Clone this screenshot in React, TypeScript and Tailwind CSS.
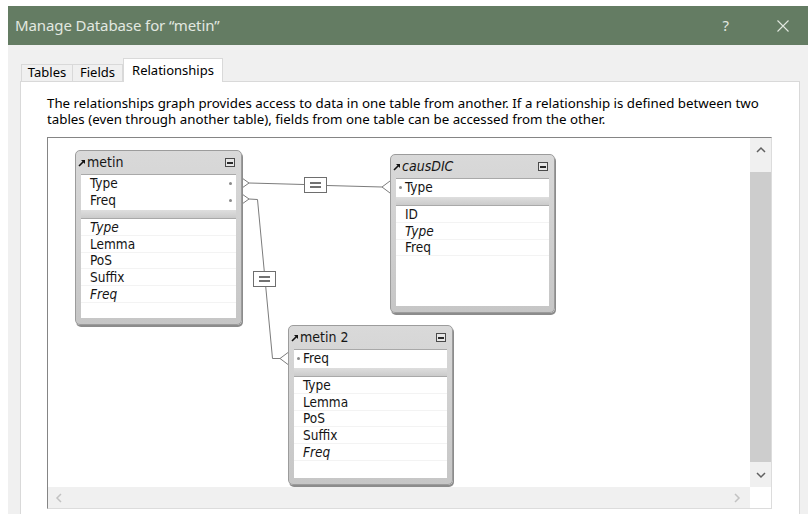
import React from "react";

type Field = { name: string; italic?: boolean };
type KeyField = Field & { dot: "left" | "right" };

type TableProps = {
  name: string;
  italicName?: boolean;
  keys: KeyField[];
  fields: Field[];
  className: string;
};

function LinkArrow() {
  return (
    <svg width="8" height="8" viewBox="0 0 8 8" className="shrink-0">
      <path d="M1 7 L5.5 2.5" stroke="#111" strokeWidth="1.6" />
      <path d="M3 1 H7 V5 Z" fill="#111" />
    </svg>
  );
}

function CollapseBox() {
  return (
    <div className="flex h-[9px] w-[10px] items-center border border-[#4a4a4a] bg-[#e6e6e6] px-[1px]">
      <div className="h-[2px] w-full bg-[#2a2a2a]" />
    </div>
  );
}

function DbTable({ name, italicName, keys, fields, className }: TableProps) {
  return (
    <div
      className={`absolute flex flex-col rounded-[5px] border border-[#9c9c9c] bg-gradient-to-b from-[#d9d9d9] to-[#c6c6c6] pb-[6px] shadow-[1px_2px_0_#8c8c8c] ${className}`}
    >
      <div className="flex h-[23px] items-center pl-[2px] pr-[6px]">
        <LinkArrow />
        <span className={`ml-[1px] text-[14px] text-[#161616] ${italicName ? "italic" : ""}`}>
          {name}
        </span>
        <div className="ml-auto">
          <CollapseBox />
        </div>
      </div>
      <div className="mx-[5px] border-t border-[#a9a9a9] bg-white pb-[1px]">
        {keys.map((k) => (
          <div key={k.name} className="flex h-[17px] items-center pl-[3px] pr-[4px]">
            {k.dot === "left" && <span className="mr-[3px] h-[3px] w-[3px] rounded-full bg-[#8a8a8a]" />}
            <span className={`${k.dot === "right" ? "pl-[6px]" : ""} ${k.italic ? "italic" : ""}`}>{k.name}</span>
            {k.dot === "right" && <span className="ml-auto h-[3px] w-[3px] rounded-full bg-[#8a8a8a]" />}
          </div>
        ))}
      </div>
      <div className="mx-[5px] h-[8px] bg-gradient-to-b from-[#dedede] to-[#cbcbcb]" />
      <div className="mx-[5px] flex-1 border-t border-[#a9a9a9] bg-white">
        {fields.map((f, i) => (
          <div
            key={f.name + i}
            className={`flex h-[16.75px] items-center border-b border-[#f3f3f3] pl-[9px] ${f.italic ? "italic" : ""}`}
          >
            {f.name}
          </div>
        ))}
      </div>
    </div>
  );
}

function Chevron({ dir, color }: { dir: "up" | "down" | "left" | "right"; color: string }) {
  const d = {
    up: "M1 6 L5 2 L9 6",
    down: "M1 2 L5 6 L9 2",
    left: "M6 1 L2 5 L6 9",
    right: "M2 1 L6 5 L2 9",
  }[dir];
  const vertical = dir === "up" || dir === "down";
  return (
    <svg width={vertical ? 10 : 8} height={vertical ? 8 : 10} viewBox={vertical ? "0 0 10 8" : "0 0 8 10"}>
      <path d={d} fill="none" stroke={color} strokeWidth="1.5" />
    </svg>
  );
}

function EqualsBox({ x, y }: { x: number; y: number }) {
  return (
    <g>
      <rect x={x + 0.5} y={y + 0.5} width="22" height="15" fill="#fff" stroke="#6e6e6e" />
      <path d={`M${x + 6} ${y + 6} H${x + 17} M${x + 6} ${y + 10} H${x + 17}`} stroke="#444" strokeWidth="1.6" />
    </g>
  );
}

function RelationLines() {
  return (
    <svg className="absolute inset-0 h-full w-full" fill="none">
      <g stroke="#7c7c7c" strokeWidth="1">
        {/* metin.Type -> causDIC.Type */}
        <path d="M194 40 L201 45 L194 50" />
        <path d="M201 45 L256 46.5" />
        <path d="M279 47.5 L334 49" />
        <path d="M342 43 L334 49 L342 55" />
        {/* metin.Freq -> metin 2.Freq */}
        <path d="M194 56 L201 61 L194 66" />
        <path d="M201 61 L209.5 61.5 L224.5 220.5 L232 220.5" />
        <path d="M240 214.5 L232 220.5 L240 226.5" />
      </g>
      <EqualsBox x={256} y={39} />
      <EqualsBox x={205} y={133} />
    </svg>
  );
}

export default function App() {
  return (
    <div className="h-[514px] w-[808px] overflow-hidden bg-white pl-[8px] pt-[6px] font-['Noto_Sans',sans-serif] text-black">
      <div className="flex h-[39px] items-center bg-[#647c63] pl-[7px] text-[#e2e8e0]">
        <span className="text-[15px] tracking-[-0.1px]">Manage Database for “metin”</span>
        <span className="ml-auto text-[15px]">?</span>
        <svg width="12" height="12" viewBox="0 0 12 12" className="ml-[48px] mr-[19px]">
          <path d="M0.5 0.5 L11.5 11.5 M11.5 0.5 L0.5 11.5" stroke="#e2e8e0" strokeWidth="1.1" />
        </svg>
      </div>

      <div className="h-[469px] bg-[#f0f0f0] pl-[12px] pt-[13px]">
        <div className="relative z-10 -mb-px flex h-[24px] items-end pl-px text-[13px]">
          <div className="mb-px flex h-[17px] w-[52px] items-center justify-center border border-b-0 border-[#d9d9d9] bg-[#f0f0f0]">
            Tables
          </div>
          <div className="mb-px flex h-[17px] w-[50px] items-center justify-center border border-b-0 border-l-0 border-[#d9d9d9] bg-[#f0f0f0]">
            Fields
          </div>
          <div className="flex h-[24px] w-[100px] items-start justify-center border border-b-0 border-[#d9d9d9] bg-white pt-[2px]">
            Relationships
          </div>
        </div>

        <div className="h-[440px] w-[780px] border border-[#d9d9d9] bg-white pl-[26px] pt-[13px]">
          <div className="text-[13.3px] leading-[16px]">
            <div className="h-[16px]">
              The relationships graph provides access to data in one table from another. If a relationship is defined between two
            </div>
            <div className="h-[16px]">
              tables (even through another table), fields from one table can be accessed from the other.
            </div>
          </div>

          <div className="mt-[10px] flex h-[372px] w-[725px] flex-col border border-b-[#dcdcdc] border-l-[#858585] border-r-[#dcdcdc] border-t-[#858585]">
            <div className="flex flex-1">
              <div className="relative flex-1 overflow-hidden bg-white font-['DejaVu_Sans_Condensed','DejaVu_Sans',sans-serif] text-[13.5px] text-[#141414]">
                <RelationLines />
                <DbTable
                  name="metin"
                  keys={[
                    { name: "Type", dot: "right" },
                    { name: "Freq", dot: "right" },
                  ]}
                  fields={[
                    { name: "Type", italic: true },
                    { name: "Lemma" },
                    { name: "PoS" },
                    { name: "Suffix" },
                    { name: "Freq", italic: true },
                  ]}
                  className="left-[27px] top-[12px] h-[175px] w-[167px]"
                />
                <DbTable
                  name="causDIC"
                  italicName
                  keys={[{ name: "Type", dot: "left" }]}
                  fields={[{ name: "ID" }, { name: "Type", italic: true }, { name: "Freq" }]}
                  className="left-[342px] top-[16px] h-[159px] w-[165px]"
                />
                <DbTable
                  name="metin 2"
                  keys={[{ name: "Freq", dot: "left" }]}
                  fields={[
                    { name: "Type" },
                    { name: "Lemma" },
                    { name: "PoS" },
                    { name: "Suffix" },
                    { name: "Freq", italic: true },
                  ]}
                  className="left-[240px] top-[187px] h-[160px] w-[165px]"
                />
              </div>
              <div className="flex w-[21px] flex-col bg-[#f0f0f0]">
                <div className="flex h-[24px] items-center justify-center">
                  <Chevron dir="up" color="#606060" />
                </div>
                <div className="h-[10px]" />
                <div className="h-[290px] bg-[#cdcdcd]" />
                <div className="flex flex-1 items-center justify-center">
                  <Chevron dir="down" color="#606060" />
                </div>
              </div>
            </div>
            <div className="flex h-[21px]">
              <div className="flex flex-1 items-center justify-between bg-[#f0f0f0] pl-[7px] pr-[9px]">
                <Chevron dir="left" color="#c2c2c2" />
                <Chevron dir="right" color="#c2c2c2" />
              </div>
              <div className="w-[21px] bg-white" />
            </div>
          </div>
        </div>
      </div>
    </div>
  );
}
